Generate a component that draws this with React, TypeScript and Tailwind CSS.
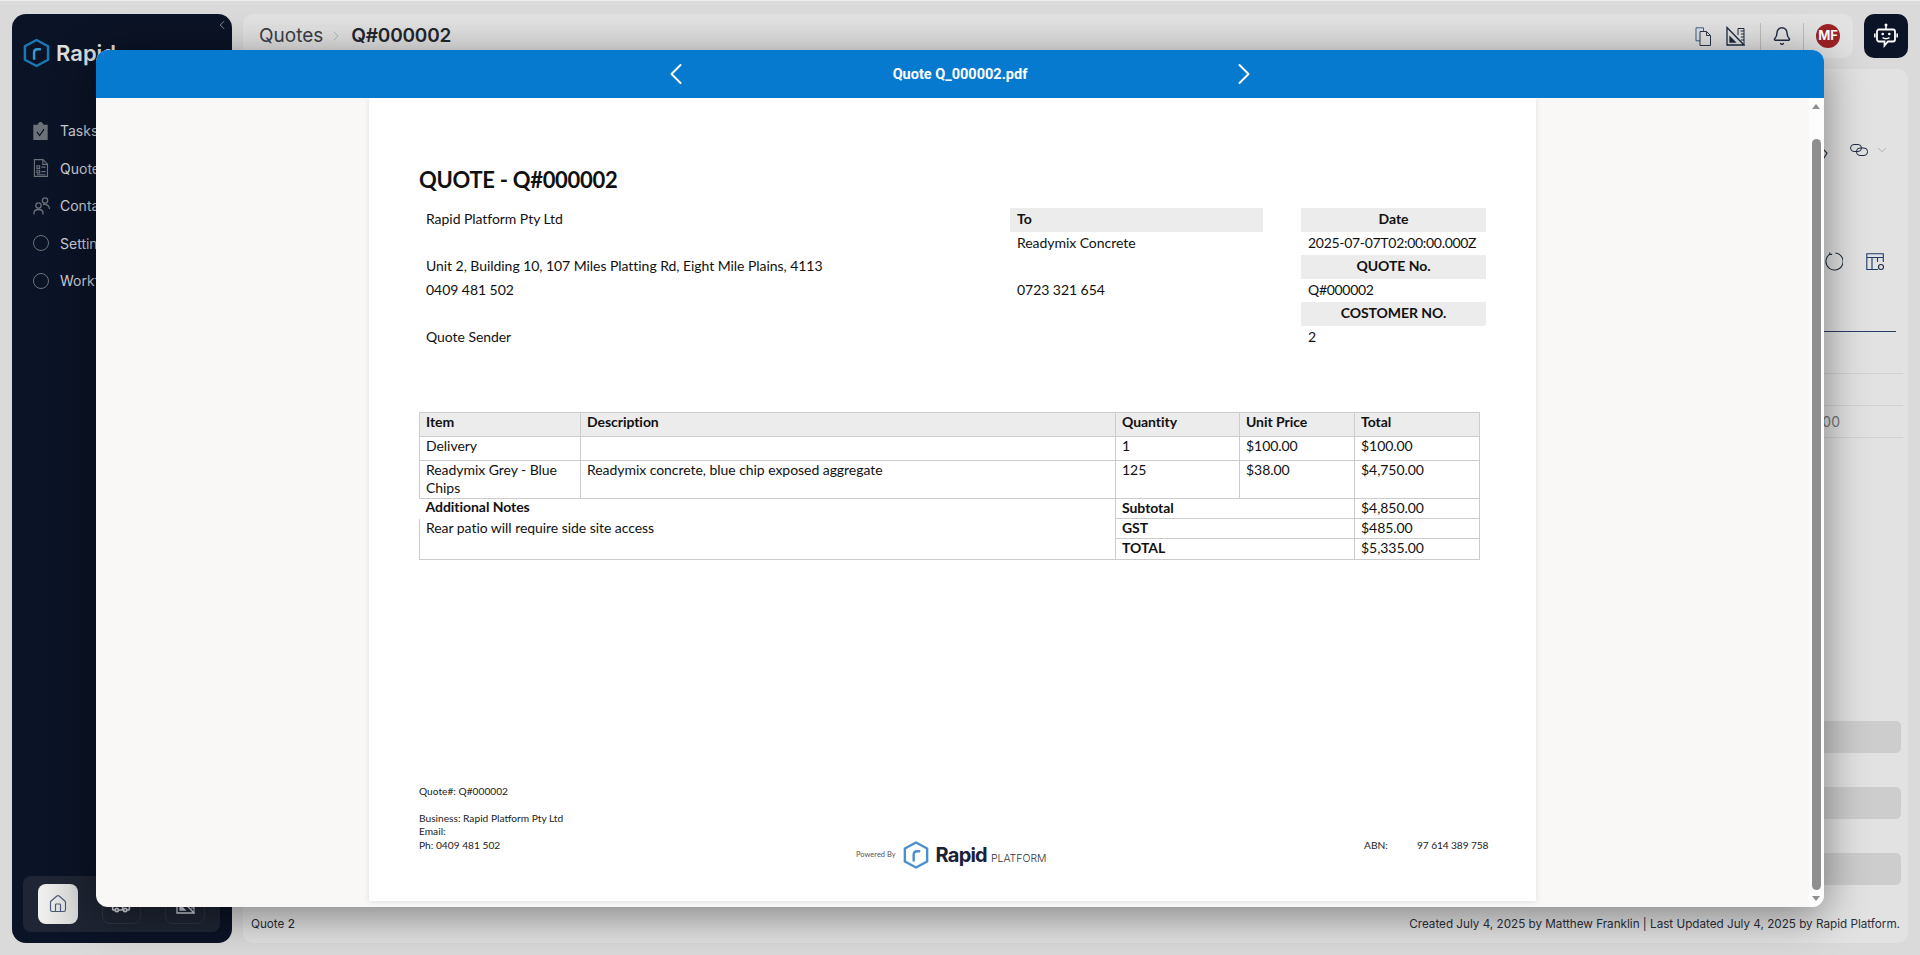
import React from 'react';
import { Bell, ChevronDown, ChevronLeft, ChevronRight, Home, Truck } from 'lucide-react';

const doc = "font-['Lato','Liberation_Sans',sans-serif]";

function HexLogo({ className, stroke, tick }: { className: string; stroke: string; tick: string }) {
  return (
    <svg viewBox="0 0 28 30" className={className} fill="none">
      <path d="M14 1.5 26 8v14l-12 6.5L2 22V8z" stroke={stroke} strokeWidth="2.6" strokeLinejoin="round" />
      <path d="M11.5 21v-6.5q0-3.5 3.5-3.5h2.5" stroke={tick} strokeWidth="2.6" strokeLinecap="round" />
    </svg>
  );
}

function TasksIcon() {
  return (
    <svg viewBox="0 0 16 20" className="h-[18px] w-[15px]" fill="none">
      <path d="M0 3h5V1.500h1.500V0h3v1.500H11V3h5v17H0z" fill="#6b7079" />
      <path d="m4 11 3 4 5-7" stroke="#0b1326" strokeWidth="1.300" />
    </svg>
  );
}

function QuotesIcon() {
  return (
    <svg viewBox="0 0 16 20" className="h-[18px] w-[16px]" fill="none" stroke="#6b7079" strokeWidth="1.300">
      <path d="M.7.7h9.500l5 5v13.600H.7z" />
      <path d="M10 1v5h5" />
      <path d="M3.500 7.500h3v3h-3zM3.500 12.500h3v3h-3zM8.500 9h4.500M8.500 14h4.500M3.500 17.500h9.500" />
    </svg>
  );
}

function ContactsIcon() {
  return (
    <svg viewBox="0 0 17 18" className="h-[18px] w-[17px]" fill="none" stroke="#6b7079" strokeWidth="1.300">
      <circle cx="5.500" cy="8.500" r="2.700" />
      <circle cx="12" cy="3.500" r="2.700" />
      <path d="M1 17.500V16q0-3.500 4.500-3.500T10 16v1.500M10 7.500q6-.5 6.500 4.500" />
    </svg>
  );
}

function CircleIcon() {
  return <div className="h-4 w-4 rounded-full border-[1.5px] border-[#6b7079]" />;
}

function CopyIcon() {
  return (
    <svg viewBox="0 0 17 19" className="h-[19px] w-[17px]" fill="none" strokeWidth="1">
      <path d="M1 .8h7.500v13H1z" stroke="#3b5f93" fill="#e0e0e0" />
      <path d="M5 4.500h6.500l4 4v10H5z" stroke="#2b3648" fill="#e4e4e4" />
      <path d="M11.500 4.500v4h4" stroke="#2b3648" />
    </svg>
  );
}

function SetSquareIcon({ color = '#1d2a40' }: { color?: string }) {
  return (
    <svg viewBox="0 0 19 20" className="h-5 w-[19px]" fill="none" stroke={color} strokeWidth="1.300">
      <path d="M1 1.500 18 19H1z" />
      <path d="M4 11l5 5H4z" fill={color} />
      <path d="M12 2.500h6v16M12 2.500v6.500M14.500 5H18M15 8h3M15 11h3M15 14h3" strokeWidth="1" />
    </svg>
  );
}

function RobotIcon() {
  return (
    <svg viewBox="0 0 24 26" className="h-[26px] w-6" fill="none">
      <circle cx="12" cy="2" r="1.500" fill="#fff" />
      <path d="M12 3v3" stroke="#fff" strokeWidth="1.500" />
      <path d="M5 6.500h14a2 2 0 0 1 2 2v8a2 2 0 0 1-2 2h-5l-3.500 4v-4H5a2 2 0 0 1-2-2v-8a2 2 0 0 1 2-2z" stroke="#fff" strokeWidth="1.800" />
      <path d="M.8 10.500v4M23.200 10.500v4" stroke="#fff" strokeWidth="1.600" />
      <circle cx="8.700" cy="11" r="1.300" fill="#fff" />
      <circle cx="15.300" cy="11" r="1.300" fill="#fff" />
      <path d="M8.500 14.700q3.500 2 7 0" stroke="#fff" strokeWidth="1.400" />
    </svg>
  );
}

function NavItem({ icon, label }: { icon: React.ReactNode; label: string }) {
  return (
    <div className="flex h-[37.500px] items-center">
      <div className="flex w-[27px] justify-start">{icon}</div>
      <span className="text-[14px] whitespace-nowrap text-[#ccd0d7]">{label}</span>
    </div>
  );
}

function Sidebar() {
  return (
    <aside className="relative flex h-[929px] w-[220px] shrink-0 flex-col rounded-[14px] bg-[#0b1326]">
      <ChevronLeft className="absolute top-[4px] right-[3px] h-[14px] w-[14px] text-[#9aa0ab]" strokeWidth={1.5} />
      <div className="mt-[24px] ml-[11px] flex items-center gap-[6px]">
        <HexLogo className="h-[30px] w-[27px]" stroke="#1a78b4" tick="#2d9ad6" />
        <span className="text-[22px] leading-[30px] font-semibold text-[#dfe0e2]">Rapid</span>
      </div>
      <nav className="mt-[44px] ml-[21px] flex flex-col">
        <NavItem icon={<TasksIcon />} label="Tasks" />
        <NavItem icon={<QuotesIcon />} label="Quotes" />
        <NavItem icon={<ContactsIcon />} label="Contacts" />
        <NavItem icon={<CircleIcon />} label="Settings" />
        <NavItem icon={<CircleIcon />} label="Workflows" />
      </nav>
      <div className="mt-auto mb-[11px] ml-[11px] flex h-[56px] w-[197px] items-center gap-[24px] rounded-[8px] bg-[#1f2534] px-[15px]">
        <div className="flex h-10 w-10 items-center justify-center rounded-[8px] bg-gradient-to-r from-[#f0f0ee] to-[#d9d9d9]">
          <Home className="h-[20px] w-[20px] text-[#4a5a78]" strokeWidth={1.4} />
        </div>
        <div className="flex h-10 w-10 items-center justify-center rounded-[8px] border border-[#2f3545]">
          <Truck className="mt-[2px] h-[20px] w-[20px] text-[#d4d8df]" strokeWidth={2} />
        </div>
        <div className="flex h-10 w-10 items-center justify-center rounded-[8px] border border-[#2f3545]">
          <SetSquareIcon color="#d4d8df" />
        </div>
      </div>
    </aside>
  );
}

function TopBar() {
  return (
    <div className="flex gap-[11px]">
      <header className="flex h-[44px] flex-1 items-center rounded-[10px] bg-[#e2e2e2] pr-[13px] pl-[16px]">
        <span className="mt-[1px] text-[19px] text-[#3b3f46]">Quotes</span>
        <ChevronRight className="mr-[7px] ml-[5px] h-[16px] w-[16px] text-[#a8a8a8]" strokeWidth={1.2} />
        <span className="mt-[1px] text-[19px] font-semibold tracking-[-0.2px] text-[#23262c]">Q#000002</span>
        <div className="ml-auto flex items-center">
          <CopyIcon />
          <div className="ml-[14px]"><SetSquareIcon /></div>
          <div className="ml-[15px] h-[27px] w-px bg-[#bdbdbd]" />
          <Bell className="mx-[11px] h-[20px] w-[20px] text-[#1d2a40]" strokeWidth={1.7} />
          <div className="h-[27px] w-px bg-[#bdbdbd]" />
          <div className="ml-[12px] flex h-6 w-6 items-center justify-center rounded-full bg-[#9b2226] text-[13px] font-bold text-white">MF</div>
        </div>
      </header>
      <button className="flex h-[44px] w-[44px] items-center justify-center rounded-[10px] bg-[#0b1326]">
        <RobotIcon />
      </button>
    </div>
  );
}

function BehindPanel() {
  return (
    <section className="mt-[11px] flex h-[874px] flex-col rounded-[10px] bg-[#e2e2e2]">
      {/* only the right edge of this panel shows next to the modal */}
      <div className="mt-[74px] mr-[19px] flex items-center justify-end gap-[7px]">
        <svg viewBox="0 0 14 14" className="mr-[15px] h-[14px] w-[14px] translate-y-[4px]" fill="none" stroke="#1d2a40" strokeWidth="1.100">
          <path d="M2 11 10 3l3 3-3 5-2 2H2z" />
        </svg>
        <svg viewBox="0 0 18 12" className="h-3 w-[18px]" fill="none" stroke="#1d2a40" strokeWidth="1">
          <rect x=".5" y=".5" width="11" height="7" rx="3.500" />
          <rect x="6.500" y="4" width="11" height="7.500" rx="3.500" />
        </svg>
        <ChevronDown className="h-[14px] w-[14px] text-[#8c8c8c]" strokeWidth={1} />
      </div>
      <div className="mt-[95px] mr-[23px] flex items-center justify-end gap-[23px]">
        <svg viewBox="0 0 20 20" className="h-[19px] w-[19px]" fill="none" stroke="#1d2a40" strokeWidth="1.100">
          <path d="M6 2.500a9 9 0 1 0 6-1.500M6 2.500V.5M6 2.500h2.500" />
        </svg>
        <svg viewBox="0 0 19 18" className="h-[18px] w-[19px]" fill="none" stroke="#1d2a40" strokeWidth="1.100">
          <path d="M12 16.500H.8V.8h16.500V9M.8 4.500h16.500M6 4.500v12M11.500 4.500V9" stroke="#1f3a6e" />
          <circle cx="15" cy="14" r="2.500" />
        </svg>
      </div>
      <div className="mt-[60px] mr-[12px] h-px bg-[#2c3f66]" />
      <div className="mt-[41px] mr-[5px] h-px bg-[#d2d2d2]" />
      <div className="mt-[31px] mr-[5px] h-px bg-[#d2d2d2]" />
      <div className="mr-[68px] flex h-[31px] items-center justify-end text-[14px] text-[#777]">$0.00</div>
      <div className="mr-[5px] h-px bg-[#d2d2d2]" />
      <div className="mt-[283px] flex flex-col gap-[34px] pr-[7px]">
        <div className="h-[32px] rounded-[5px] bg-[#cdcdcd]" />
        <div className="h-[32px] rounded-[5px] bg-[#cdcdcd]" />
        <div className="h-[32px] rounded-[5px] bg-[#cdcdcd]" />
      </div>
      <div className="mt-auto flex h-[36px] items-center justify-between px-[8px] text-[11.700px] text-[#2a2f3a]">
        <span>Quote <span className="font-medium">2</span></span>
        <span>Created July 4, 2025 by Matthew Franklin | Last Updated July 4, 2025 by Rapid Platform.</span>
      </div>
    </section>
  );
}

const head = 'bg-[#ececec] font-bold';
const cell = 'px-[7px] align-top leading-[21px] whitespace-nowrap';
const line = 'border border-[#cccccc] px-[6px] align-top leading-[18px]';
const sumCell = 'border border-[#cccccc] px-[6px] align-top leading-[17px]';

function InfoTable() {
  const rows: [string, string, string, boolean][] = [
    ['Rapid Platform Pty Ltd', 'To', 'Date', true],
    ['', 'Readymix Concrete', '2025-07-07T02:00:00.000Z', false],
    ['Unit 2, Building 10, 107 Miles Platting Rd, Eight Mile Plains, 4113', '', 'QUOTE No.', true],
    ['0409 481 502', '0723 321 654', 'Q#000002', false],
    ['', '', 'COSTOMER NO.', true],
    ['Quote Sender', '', '2', false],
  ];
  return (
    <table className="mt-[12px] w-[1067px] table-fixed border-collapse text-[14px] tracking-[-0.05px] text-[#111]">
      <colgroup>
        <col className="w-[591px]" />
        <col className="w-[253px]" />
        <col className="w-[38px]" />
        <col className="w-[185px]" />
      </colgroup>
      <tbody>
        {rows.map(([left, mid, right, isHead], i) => (
          <tr key={i} className="h-[23.500px]">
            <td className={cell}>{left}</td>
            <td className={`${cell} ${i === 0 ? head : ''}`}>{mid}</td>
            <td />
            <td className={`${cell} ${isHead ? `${head} text-center` : 'tracking-[-0.3px]'}`}>{right}</td>
          </tr>
        ))}
      </tbody>
    </table>
  );
}

function LineTable() {
  return (
    <table className="mt-[63px] w-[1060px] table-fixed border-collapse text-[14px] tracking-[-0.05px] text-[#111]">
      <colgroup>
        <col className="w-[161px]" />
        <col className="w-[535px]" />
        <col className="w-[124px]" />
        <col className="w-[115px]" />
        <col className="w-[125px]" />
      </colgroup>
      <tbody>
        <tr className={`h-[24px] ${head}`}>
          <td className={line}>Item</td>
          <td className={line}>Description</td>
          <td className={line}>Quantity</td>
          <td className={line}>Unit Price</td>
          <td className={line}>Total</td>
        </tr>
        <tr className="h-[24px]">
          <td className={line}>Delivery</td>
          <td className={line} />
          <td className={line}>1</td>
          <td className={line}>$100.00</td>
          <td className={line}>$100.00</td>
        </tr>
        <tr className="h-[38px]">
          <td className={line}>Readymix Grey - Blue Chips</td>
          <td className={line}>Readymix concrete, blue chip exposed aggregate</td>
          <td className={line}>125</td>
          <td className={line}>$38.00</td>
          <td className={line}>$4,750.00</td>
        </tr>
        <tr className="h-[20px]">
          <td colSpan={2} className="border-t border-[#cccccc] px-[6px] align-top leading-[16px] font-bold">Additional Notes</td>
          <td colSpan={2} className={`${sumCell} leading-[16px] font-bold`}>Subtotal</td>
          <td className={`${sumCell} leading-[16px]`}>$4,850.00</td>
        </tr>
        <tr className="h-[20px]">
          <td colSpan={2} rowSpan={2} className={`${sumCell} border-t-0 leading-[11px]`}>Rear patio will require side site access</td>
          <td colSpan={2} className={`${sumCell} font-bold`}>GST</td>
          <td className={sumCell}>$485.00</td>
        </tr>
        <tr className="h-[21px]">
          <td colSpan={2} className={`${sumCell} font-bold`}>TOTAL</td>
          <td className={sumCell}>$5,335.00</td>
        </tr>
      </tbody>
    </table>
  );
}

function PdfPage() {
  return (
    <div className={`${doc} flex h-[803px] w-[1167px] shrink-0 flex-col bg-white pr-[30px] pl-[50px] shadow-[0_1px_6px_rgba(0,0,0,0.1)]`}>
      <h1 className="mt-[65px] text-[22px] leading-[33px] font-bold tracking-[-0.3px] text-[#111]">QUOTE - Q#000002</h1>
      <InfoTable />
      <LineTable />
      <div className="mt-auto mb-[49px] flex items-end text-[10.200px] leading-[13.500px] text-[#222]">
        <div className="w-[437px] shrink-0">
          <p>Quote#: Q#000002</p>
          <p className="mt-[13.500px]">Business: Rapid Platform Pty Ltd</p>
          <p>Email:</p>
          <p>Ph: 0409 481 502</p>
        </div>
        <div className="mb-[-18px] flex w-[508px] shrink-0 items-center">
          <span className="mr-[7px] text-[7.500px] text-[#555]">Powered By</span>
          <HexLogo className="h-[30px] w-[26px]" stroke="#4a90d0" tick="#4a90d0" />
          <span className="ml-[7px] font-['Inter',sans-serif] text-[20px] leading-[30px] font-bold tracking-[-0.8px] text-[#1a2238]">Rapid</span>
          <span className="mt-[7px] ml-[4px] font-['Inter',sans-serif] text-[10.500px] font-light text-[#333]">PLATFORM</span>
        </div>
        <div className="flex whitespace-nowrap">
          <span className="w-[53px]">ABN:</span>
          <span className="tracking-[-0.1px]">97 614 389 758</span>
        </div>
      </div>
    </div>
  );
}

function PdfModal() {
  return (
    <div className="absolute top-[49px] left-[96px] flex h-[857px] w-[1728px] flex-col overflow-hidden rounded-[12px] bg-[#f9f8f6] shadow-[0_8px_44px_rgba(0,0,0,0.45)]">
      <div className="relative flex h-[48px] shrink-0 items-center justify-center bg-[#057acf] text-white">
        <ChevronLeft className="absolute left-[562px] h-[36px] w-[36px]" strokeWidth={1.3} />
        <span className="mt-[2px] font-['Roboto',sans-serif] text-[14.500px] font-bold">Quote Q_000002.pdf</span>
        <ChevronRight className="absolute left-[1130px] h-[36px] w-[36px]" strokeWidth={1.3} />
      </div>
      <div className="flex min-h-0 flex-1">
        <div className="flex flex-1 justify-center">
          <PdfPage />
        </div>
        {/* scrollbar */}
        <div className="flex w-[15px] flex-col items-center bg-[#fdfdfd] pr-[1px]">
          <div className="mt-[6px] h-0 w-0 border-x-[4.500px] border-b-[5px] border-x-transparent border-b-[#8f8f8f]" />
          <div className="mt-[30px] h-[751px] w-[9px] rounded-full bg-[#8f8f8f]" />
          <div className="mt-[6px] h-0 w-0 border-x-[4.500px] border-t-[5px] border-x-transparent border-t-[#8f8f8f]" />
        </div>
      </div>
    </div>
  );
}

export default function App() {
  return (
    <div className="relative h-[955px] w-[1920px] overflow-hidden border-t border-[#eeeeee] bg-[#dadada] pt-[13px] pr-[12px] pl-[12px] font-['Inter',sans-serif]">
      <div className="flex gap-[11px]">
        <Sidebar />
        <main className="min-w-0 flex-1">
          <TopBar />
          <BehindPanel />
        </main>
      </div>
      <PdfModal />
    </div>
  );
}
